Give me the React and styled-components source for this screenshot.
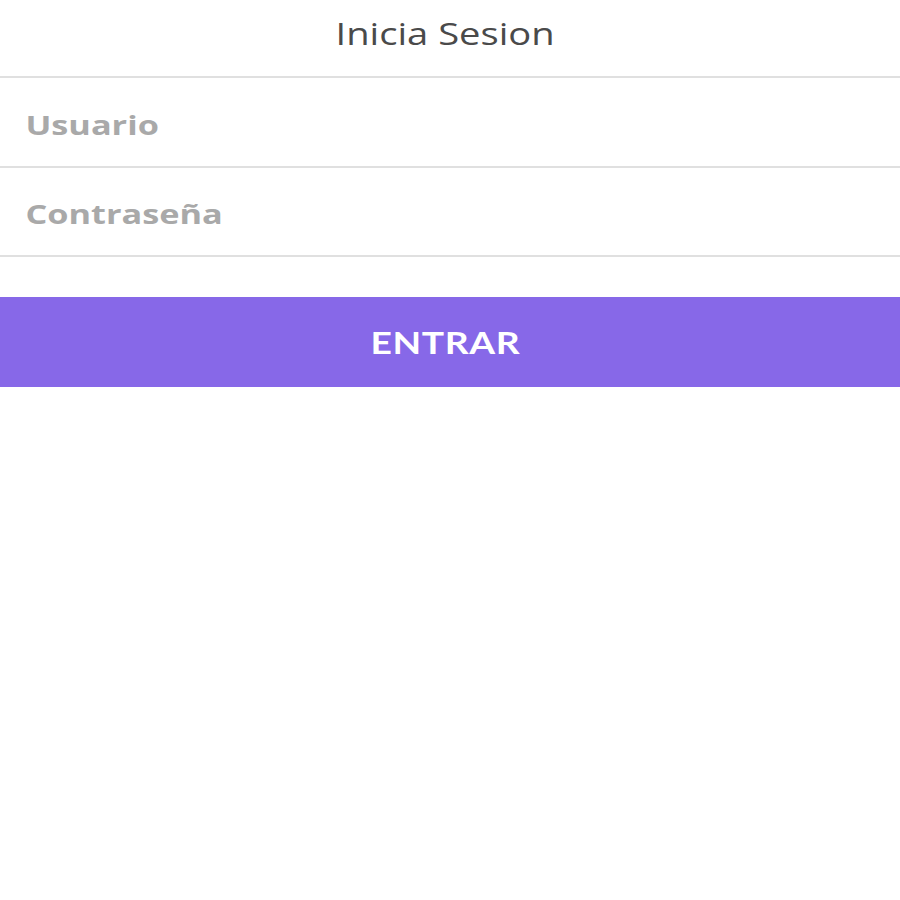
import React from 'react'
import styled, { createGlobalStyle } from 'styled-components'

const Global = createGlobalStyle`
    body {
        margin: 0;
        background: #fff;
        font-family: "Open Sans", "Liberation Sans", sans-serif;
    }
`

const Page = styled.div`
    display: flex;
    flex-direction: column;
    width: 900px;
`

const Header = styled.h1`
    margin: 0;
    height: 78px;
    box-sizing: border-box;
    padding-bottom: 10px;
    display: flex;
    align-items: center;
    justify-content: center;
    font-size: 31px;
    font-weight: 400;
    color: #4a4a4a;
    border-bottom: 2px solid #e0e0e0;
`

// the whole shot is a little stretched sideways, so the words are too
const Wide = styled.span`
    display: inline-block;
    transform: translateX(-5px) scaleX(${p => p.$x || 1.23});
`

// inputs get drawn narrow then stretched, the placeholder can't be scaled alone
const Field = styled.input`
    align-self: flex-start;
    width: 709px;
    height: ${p => p.$h || 90}px;
    box-sizing: border-box;
    transform-origin: left center;
    transform: scaleX(1.27);
    border: none;
    border-bottom: 2px solid #e0e0e0;
    padding: 4px 20px 0;
    font-family: "Open Sans", sans-serif;
    font-size: 27px;
    font-weight: 700;
    outline: none;
    &::placeholder {
        color: #a9a9a9;
    }
`

const Button = styled.button`
    margin-top: 40px;
    height: 90px;
    border: none;
    padding: 0;
    background: #8768e8;
    color: #fff;
    font-family: "Lato", "Open Sans", sans-serif;
    font-size: 31px;
    font-weight: 700;
    letter-spacing: 0.5px;
`

export default function App() {
    return (
        <>
            <Global />
            <Page>
                <Header><Wide>Inicia Sesion</Wide></Header>
                <Field placeholder="Usuario" />
                <Field $h={89} type="password" placeholder="Contraseña" />
                <Button><Wide $x={1.2}>ENTRAR</Wide></Button>
            </Page>
        </>
    )
}
